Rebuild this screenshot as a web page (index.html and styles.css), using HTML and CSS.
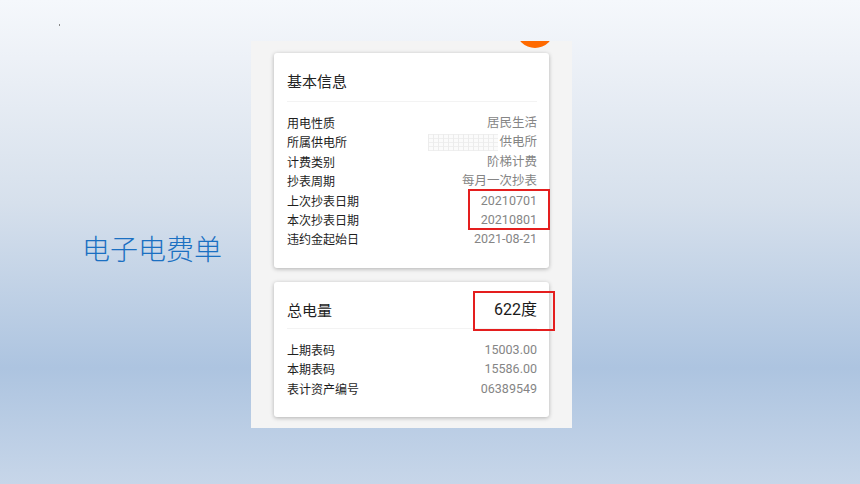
FILE: index.html
```html
<!DOCTYPE html>
<html>
<head>
  <meta charset="UTF-8">
  <title>电子电费单</title>
  <link rel="stylesheet" href="styles.css">
</head>
<body>
  <div class="slide">
    <div class="side">
      <span class="mark"></span>
      <h1 class="title">电子电费单</h1>
    </div>

    <div class="phone">
      <span class="badge"></span>

      <div class="card">
        <div class="card-head">基本信息</div>
        <div class="rows">
          <div class="row"><span>用电性质</span><span class="val">居民生活</span></div>
          <div class="row"><span>所属供电所</span><span class="val"><span class="mosaic"></span>供电所</span></div>
          <div class="row"><span>计费类别</span><span class="val">阶梯计费</span></div>
          <div class="row"><span>抄表周期</span><span class="val">每月一次抄表</span></div>
          <div class="row"><span>上次抄表日期</span><span class="val">20210701</span></div>
          <div class="row"><span>本次抄表日期</span><span class="val">20210801</span></div>
          <div class="row"><span>违约金起始日</span><span class="val">2021-08-21</span></div>
        </div>
        <span class="mark-box box-dates"></span>
      </div>

      <div class="card">
        <div class="card-head split"><span>总电量</span><span class="total">622度</span></div>
        <div class="rows">
          <div class="row"><span>上期表码</span><span class="val">15003.00</span></div>
          <div class="row"><span>本期表码</span><span class="val">15586.00</span></div>
          <div class="row"><span>表计资产编号</span><span class="val">06389549</span></div>
        </div>
        <span class="mark-box box-total"></span>
      </div>
    </div>
  </div>
</body>
</html>
```

FILE: styles.css
```css
html, body { margin: 0; padding: 0; }
body {
  width: 860px;
  height: 484px;
  overflow: hidden;
  font-family: "Noto Sans CJK SC", "Noto Sans", sans-serif;
  background: linear-gradient(180deg, #f5f8fc 0%, #edf1f7 12%, #d6e0ec 42%, #adc4e0 76%, #c7d6e9 100%);
}
.slide { display: flex; height: 484px; }

/* --- left side --- */
.side {
  width: 251px;
  display: flex;
  flex-direction: column;
  padding-left: 59px;
  box-sizing: border-box;
}
.mark {
  display: block;
  width: 1px;
  height: 2px;
  margin-top: 24px;
  background: #888;
}
.title {
  margin: 204px 0 0 23px;
  font-size: 28px;
  font-weight: 300;
  line-height: 36px;
  color: #1b70c2;
  white-space: nowrap;
}

/* --- phone capture --- */
.phone {
  position: relative;
  width: 321px;
  height: 387px;
  margin-top: 41px;
  padding: 12px 23px 0;
  box-sizing: border-box;
  background: #f4f4f4;
  display: flex;
  flex-direction: column;
  gap: 14px;
  overflow: hidden;
}
.badge {
  position: absolute;
  left: 265px;
  top: -31px;
  width: 38px;
  height: 38px;
  border-radius: 50%;
  background: #ff6a00;
}
.card {
  position: relative;
  background: #fff;
  border-radius: 3px;
  box-shadow: 0 1px 4px rgba(0, 0, 0, 0.28);
  padding: 18px 12px 19px 13px;
}
.card-head {
  font-size: 15px;
  line-height: 20px;
  color: #222;
  padding-bottom: 10px;
  border-bottom: 1px solid #f3f3f3;
}
.card-head.split {
  display: flex;
  justify-content: space-between;
  padding-bottom: 8px;
}
.total {
  font-family: "Roboto", "Noto Sans CJK SC", sans-serif;
  font-size: 16px;
  color: #1a1a1a;
}
.rows { padding-top: 11px; }
.row {
  display: flex;
  justify-content: space-between;
  font-size: 12px;
  line-height: 19.4px;
  color: #1e1e1e;
}
.val {
  display: flex;
  align-items: center;
  font-family: "Roboto", "Noto Sans CJK SC", sans-serif;
  font-size: 12.5px;
  color: #858585;
}
.mosaic {
  display: inline-block;
  width: 70px;
  height: 17px;
  margin-right: 1px;
  background:
    repeating-linear-gradient(90deg, #ececec 0 1px, transparent 1px 5px),
    repeating-linear-gradient(0deg, #efefef 0 1px, #fbfbfb 1px 4px);
}

/* --- red annotation boxes --- */
.mark-box {
  position: absolute;
  border: 2px solid #e41e1e;
  box-sizing: border-box;
}
.box-dates { left: 194px; top: 136px; width: 82px; height: 41px; }
.box-total { left: 199px; top: 9px; width: 82px; height: 40px; }
```
